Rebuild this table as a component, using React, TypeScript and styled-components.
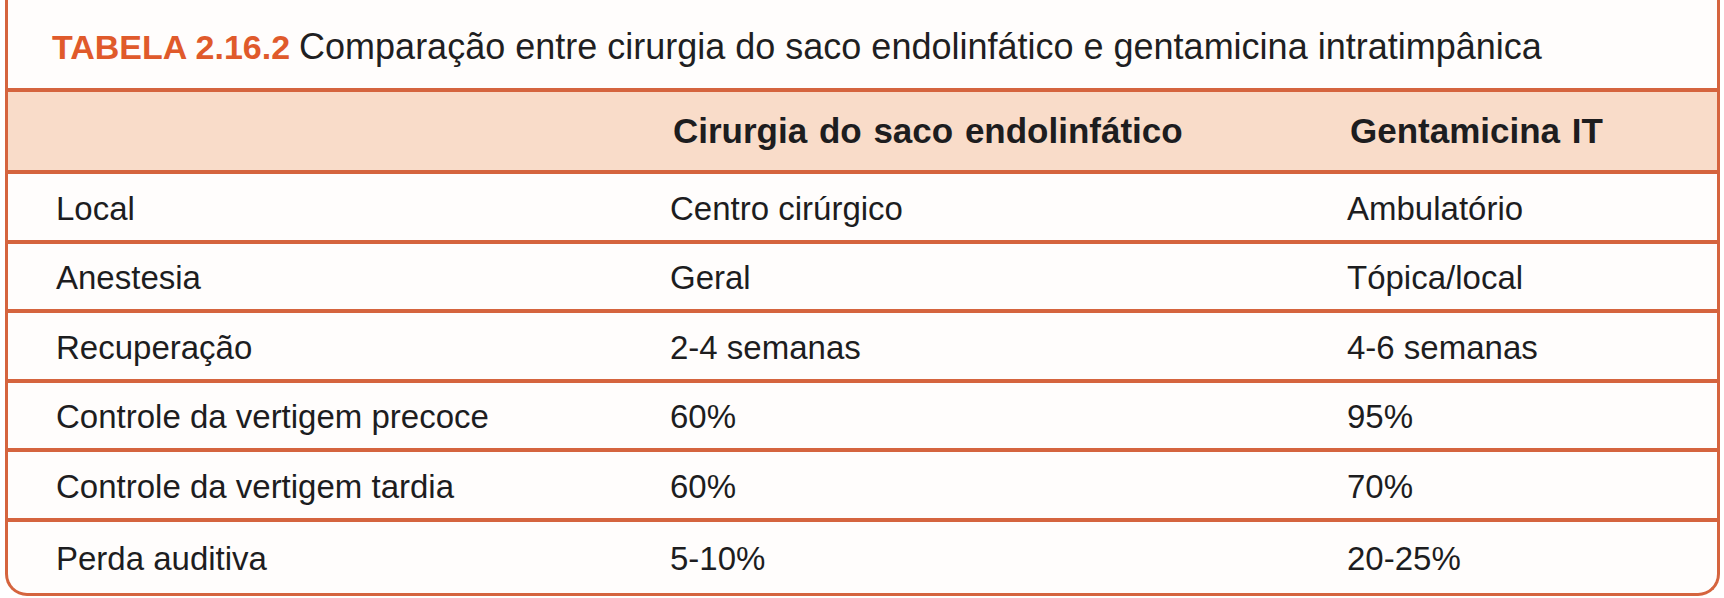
import React from "react";
import styled, { createGlobalStyle } from "styled-components";

const GlobalStyle = createGlobalStyle`
  html, body {
    margin: 0;
    padding: 0;
    background: #ffffff;
  }

  body {
    font-family: "Liberation Sans", Arial, sans-serif;
    color: #1d1d1f;
  }
`;

const Card = styled.section`
  box-sizing: border-box;
  width: 1715px;
  margin: 0 0 0 5px;
  border: 3px solid #d5643e;
  border-top: 0;
  border-radius: 0 0 22px 22px;
  background: #fffdfc;
  overflow: hidden;
`;

const Caption = styled.h1`
  margin: 0;
  height: 88px;
  box-sizing: border-box;
  padding: 29px 0 0 44px;
  font-size: 36px;
  font-weight: 400;
  line-height: 36px;
  white-space: nowrap;
  color: #1f1f22;

  b {
    color: #e05a2b;
    font-size: 34px;
    font-weight: 700;
    margin-right: 9px;
  }
`;

const Row = styled.div<{ $head?: boolean; $last?: boolean }>`
  display: grid;
  grid-template-columns: 614px 677px 1fr;
  align-items: center;
  box-sizing: border-box;
  height: ${(p) => (p.$head ? "82px" : p.$last ? "75.5px" : "69.5px")};
  padding-top: ${(p) => (p.$head ? 0 : 4)}px;
  border-top: 4px solid #d5643e;
  background: ${(p) => (p.$head ? "#f9dcc9" : "transparent")};
`;

const Cell = styled.div<{ $head?: boolean }>`
  padding-left: ${(p) => (p.$head ? 51 : 48)}px;
  font-size: ${(p) => (p.$head ? 35 : 33)}px;
  font-weight: ${(p) => (p.$head ? 700 : 400)};
  word-spacing: ${(p) => (p.$head ? "2px" : "0")};
  color: #1d1d1f;
  white-space: nowrap;
`;

const rows = [
  ["Local", "Centro cirúrgico", "Ambulatório"],
  ["Anestesia", "Geral", "Tópica/local"],
  ["Recuperação", "2-4 semanas", "4-6 semanas"],
  ["Controle da vertigem precoce", "60%", "95%"],
  ["Controle da vertigem tardia", "60%", "70%"],
  ["Perda auditiva", "5-10%", "20-25%"],
];

const App = () => {
  return (
    <>
      <GlobalStyle />
      <Card>
        <Caption>
          <b>TABELA 2.16.2</b>Comparação entre cirurgia do saco endolinfático e
          gentamicina intratimpânica
        </Caption>
        <Row $head>
          <Cell $head />
          <Cell $head>Cirurgia do saco endolinfático</Cell>
          <Cell $head>Gentamicina IT</Cell>
        </Row>
        {rows.map((r, i) => (
          <Row key={r[0]} $last={i === rows.length - 1}>
            {r.map((c) => (
              <Cell key={c}>{c}</Cell>
            ))}
          </Row>
        ))}
      </Card>
    </>
  );
};

export default App;
